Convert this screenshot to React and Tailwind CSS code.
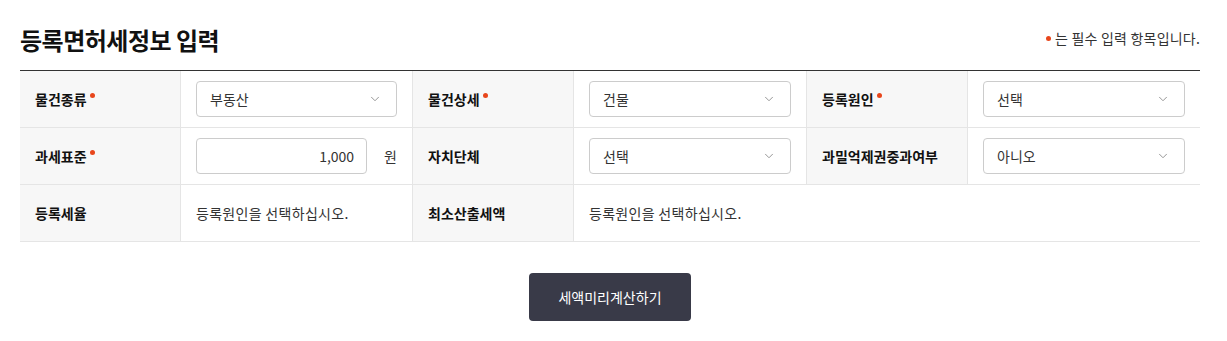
import React from "react";
import { ChevronDown } from "lucide-react";

const Dot = () => (
  <span className="inline-block w-[5px] h-[5px] rounded-full bg-[#e8461c] ml-[3px] -translate-y-[4px]" />
);

const Label = ({ children, required }) => (
  <div className="bg-[#f7f7f7] border-b border-[#e5e5e5] flex items-center px-[15px] text-[14px] font-bold text-[#111]">
    {children}
    {required && <Dot />}
  </div>
);

const Cell = ({ children, last, span }) => (
  <div
    className={
      "border-b border-[#e5e5e5] border-l border-l-[#e5e5e5] flex items-center px-[15px] " +
      (last ? "" : "border-r border-r-[#e5e5e5] ") +
      (span ? "col-span-3" : "")
    }
  >
    {children}
  </div>
);

const Select = ({ value }) => (
  <div className="w-full h-[36px] border border-[#cccccc] rounded-[4px] bg-white flex items-center justify-between pl-[13px] pr-[14px] text-[14px] text-[#333]">
    <span>{value}</span>
    <ChevronDown size={14} strokeWidth={1.5} className="text-[#888]" />
  </div>
);

export default function App() {
  return (
    <div className="bg-white w-[1227px] h-[341px] font-['Noto_Sans_CJK_KR','Noto_Sans',sans-serif]">
      <div className="ml-5 w-[1180px]">
        <div className="flex items-end justify-between h-[70px] pb-[18px]">
          <h2 className="text-[24px] font-bold text-[#111] leading-none tracking-[-0.5px]">
            등록면허세정보 입력
          </h2>
          <p className="text-[14px] text-[#333] leading-none flex items-center mb-[7px] tracking-[0.2px]">
            <span className="inline-block w-[5px] h-[5px] rounded-full bg-[#e8461c] mr-[4px]" />
            는 필수 입력 항목입니다.
          </p>
        </div>
        <div className="border-t border-[#333] grid grid-cols-[160px_233px_160px_234px_160px_1fr] auto-rows-[57px]">
          <Label required>물건종류</Label>
          <Cell>
            <Select value="부동산" />
          </Cell>
          <Label required>물건상세</Label>
          <Cell>
            <Select value="건물" />
          </Cell>
          <Label required>등록원인</Label>
          <Cell last>
            <Select value="선택" />
          </Cell>

          <Label required>과세표준</Label>
          <Cell>
            <div className="flex items-center w-full gap-[17px]">
              <div className="flex-1 h-[36px] border border-[#cccccc] rounded-[4px] bg-white flex items-center justify-end pr-[12px] text-[14px] text-[#333]">
                1,000
              </div>
              <span className="text-[14px] text-[#333]">원</span>
            </div>
          </Cell>
          <Label>자치단체</Label>
          <Cell>
            <Select value="선택" />
          </Cell>
          <Label>과밀억제권중과여부</Label>
          <Cell last>
            <Select value="아니오" />
          </Cell>

          <Label>등록세율</Label>
          <Cell>
            <span className="text-[14px] text-[#333] tracking-[0.3px]">등록원인을 선택하십시오.</span>
          </Cell>
          <Label>최소산출세액</Label>
          <Cell last span>
            <span className="text-[14px] text-[#333] tracking-[0.3px]">등록원인을 선택하십시오.</span>
          </Cell>
        </div>
        <div className="flex justify-center mt-[31px]">
          <button className="w-[162px] h-[48px] rounded-[4px] bg-[#393a48] text-white text-[14px]">
            세액미리계산하기
          </button>
        </div>
      </div>
    </div>
  );
}
